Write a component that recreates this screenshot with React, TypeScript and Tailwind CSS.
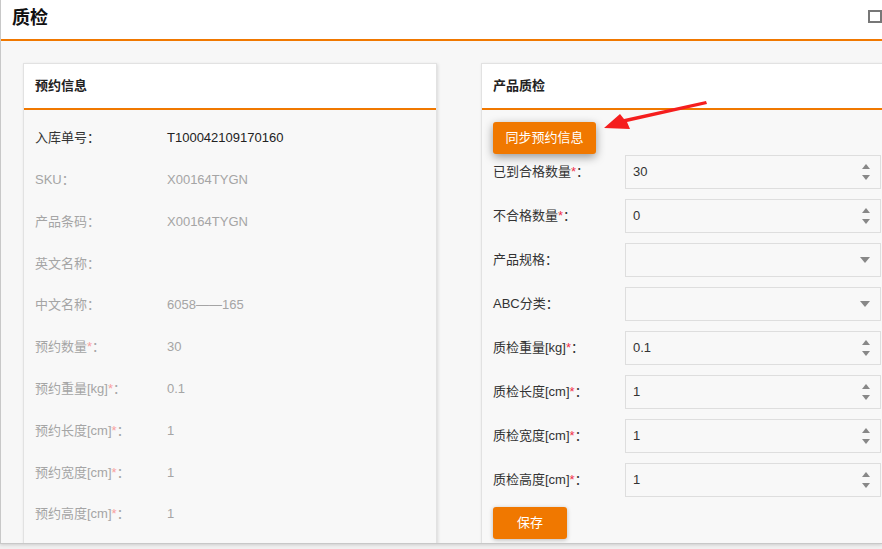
import { Fragment } from 'react';

const font = { fontFamily: '"Liberation Sans", "Noto Sans CJK SC", sans-serif' };

interface InfoRow {
    label: string;
    value: string;
    required?: boolean;
    strong?: boolean;
}

const infoRows: InfoRow[] = [
    { label: '入库单号', value: 'T100042109170160', strong: true },
    { label: 'SKU', value: 'X00164TYGN' },
    { label: '产品条码', value: 'X00164TYGN' },
    { label: '英文名称', value: '' },
    { label: '中文名称', value: '6058——165' },
    { label: '预约数量', value: '30', required: true },
    { label: '预约重量[kg]', value: '0.1', required: true },
    { label: '预约长度[cm]', value: '1', required: true },
    { label: '预约宽度[cm]', value: '1', required: true },
    { label: '预约高度[cm]', value: '1', required: true },
];

interface FormRow {
    label: string;
    value: string;
    required?: boolean;
    kind: 'number' | 'select';
}

const formRows: FormRow[] = [
    { label: '已到合格数量', value: '30', required: true, kind: 'number' },
    { label: '不合格数量', value: '0', required: true, kind: 'number' },
    { label: '产品规格', value: '', kind: 'select' },
    { label: 'ABC分类', value: '', kind: 'select' },
    { label: '质检重量[kg]', value: '0.1', required: true, kind: 'number' },
    { label: '质检长度[cm]', value: '1', required: true, kind: 'number' },
    { label: '质检宽度[cm]', value: '1', required: true, kind: 'number' },
    { label: '质检高度[cm]', value: '1', required: true, kind: 'number' },
];

function Spinner() {
    return (
        <div className="flex flex-col items-center gap-[6px]">
            <div className="w-0 h-0 border-l-[4px] border-r-[4px] border-b-[5px] border-l-transparent border-r-transparent border-b-[#888]" />
            <div className="w-0 h-0 border-l-[4px] border-r-[4px] border-t-[5px] border-l-transparent border-r-transparent border-t-[#888]" />
        </div>
    );
}

function Caret() {
    return <div className="w-0 h-0 border-l-[5px] border-r-[5px] border-t-[6px] border-l-transparent border-r-transparent border-t-[#888]" />;
}

function CardHeader({ title }: { title: string }) {
    return (
        <div className="h-[46px] bg-white border-b-2 border-[#f07800] flex items-center px-[11px]">
            <span className="text-[13px] font-bold text-[#222]">{title}</span>
        </div>
    );
}

export default function App() {
    return (
        <div className="w-[882px] h-[549px] bg-[#f0f0f0] overflow-hidden" style={font}>
            <div className="relative h-[544px] border-l border-b border-[#c8c8c8] bg-[#f7f7f7] flex flex-col overflow-hidden shadow-[0_1px_3px_rgba(0,0,0,0.15)]">
                {/* header */}
                <div className="h-[41px] shrink-0 bg-white border-b-2 border-[#f07800] flex items-center justify-between pl-[11px] pr-0">
                    <span className="text-[18px] font-bold text-[#111] leading-none -mt-[4px]">质检</span>
                    <div className="w-[14px] h-[13px] border-2 border-[#777] bg-white -mt-[6px]" />
                </div>

                {/* body */}
                <div className="flex gap-[44px] pl-[22px] pt-[22px]">
                    {/* left card */}
                    <div className="w-[414px] shrink-0 h-[520px] border border-[#e2e2e2] bg-[#f8f8f8] shadow-[1px_1px_3px_rgba(0,0,0,0.12)]">
                        <CardHeader title="预约信息" />
                        <div className="pt-[7px] pl-[11px]">
                            {infoRows.map((r) => (
                                <div key={r.label} className="h-[41.8px] flex items-center text-[13px]">
                                    <div className={`w-[132px] ${r.strong ? 'text-[#333]' : 'text-[#a5a5a5]'}`}>
                                        {r.label}
                                        {r.required && <span className="text-[#f9a0a0]">*</span>}
                                        ：
                                    </div>
                                    <div className={r.strong ? 'text-[#222]' : 'text-[#a5a5a5]'}>{r.value}</div>
                                </div>
                            ))}
                        </div>
                    </div>

                    {/* right card */}
                    <div className="w-[420px] shrink-0 h-[520px] border border-[#e2e2e2] bg-[#f8f8f8] shadow-[1px_1px_3px_rgba(0,0,0,0.12)]">
                        <CardHeader title="产品质检" />
                        <div className="pt-[12px] pl-[11px]">
                            <button className="h-[32px] w-[103px] rounded-[3px] bg-[#f07800] text-white text-[13px] shadow-[0_3px_10px_rgba(0,0,0,0.4)]">
                                同步预约信息
                            </button>
                            <div className="mt-[1px] grid grid-cols-[132px_256px] gap-y-[10px] items-center">
                                {formRows.map((r) => (
                                    <Fragment key={r.label}>
                                        <div className="text-[13px] text-[#333]">
                                            {r.label}
                                            {r.required && <span className="text-[#f0304a]">*</span>}
                                            ：
                                        </div>
                                        <div className="h-[34px] border border-[#dedede] bg-[#f8f8f8] flex items-center justify-between pl-[7px] pr-[10px]">
                                            <span className="text-[13px] text-[#333]">{r.value}</span>
                                            {r.kind === 'number' ? <Spinner /> : <Caret />}
                                        </div>
                                    </Fragment>
                                ))}
                            </div>
                            <button className="mt-[10px] h-[32px] w-[74px] rounded-[3px] bg-[#f07800] text-white text-[13px] shadow-[0_1px_4px_rgba(0,0,0,0.25)]">
                                保存
                            </button>
                        </div>
                    </div>
                </div>

                {/* annotation arrow */}
                <svg className="absolute left-[598px] top-[98px]" width="112" height="36" viewBox="0 0 112 36">
                    <polygon points="107,3 108,6 28,24 31,31 5,30 21,16 25,21" fill="#f51e1e" />
                </svg>
            </div>
        </div>
    );
}
